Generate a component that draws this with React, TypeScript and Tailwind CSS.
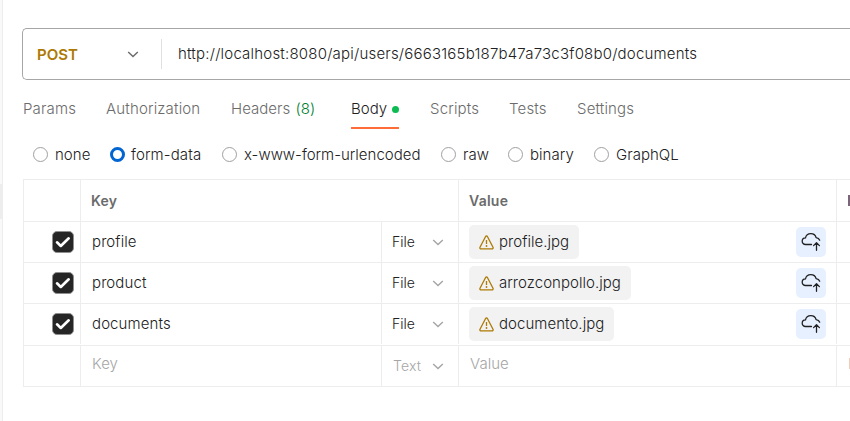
import React from "react";

function Chevron({ className, width }: { className: string; width: number }) {
  return (
    <svg width={width} height="7" viewBox="0 0 11 7" fill="none" className={className}>
      <path d="M0.7 0.9L5.5 5.6L10.3 0.9" stroke="currentColor" strokeWidth="1.4" />
    </svg>
  );
}

function Warning() {
  return (
    <svg width="15" height="15" viewBox="0 0 15 15" fill="none" className="shrink-0 text-[#ad7a03]">
      <path
        d="M6.6 1.5C7 .8 8 .8 8.4 1.5L14 12.2C14.4 13 13.9 13.900 13 13.900H2C1.100 13.900 .6 13 1 12.200Z"
        stroke="currentColor"
        strokeWidth="1.3"
        strokeLinejoin="round"
      />
      <path d="M7.500 5V9" stroke="currentColor" strokeWidth="1.300" />
      <circle cx="7.500" cy="11" r="0.900" fill="currentColor" />
    </svg>
  );
}

function CloudUpload() {
  return (
    <svg width="20" height="20" viewBox="0 0 20 20" fill="none" stroke="#212121" strokeWidth="1.300" strokeLinecap="round" strokeLinejoin="round">
      <path d="M10.500 12.500H4.500C2.500 12.500 1.200 11 1.200 9.200C1.200 7.300 2.600 6 4.500 5.900C5 3.300 7.200 1.600 9.800 1.600C12.400 1.600 14.500 3.200 15.100 5.600C16.900 5.800 18.200 6.700 18.700 8.200" />
      <path d="M15.500 18.300V11.200M12.600 13.600L15.500 10.700L18.400 13.600" />
    </svg>
  );
}

function Checkbox() {
  return (
    <span className="flex h-[22px] w-[22px] items-center justify-center rounded-[5px] border border-[#8f8f8f] bg-[#262626]">
      <svg width="16" height="14" viewBox="0 0 16 14" fill="none">
        <path d="M2 7.300L5.800 11L13.700 3.300" stroke="white" strokeWidth="2.600" strokeLinecap="round" strokeLinejoin="round" />
      </svg>
    </span>
  );
}

function Radio({ label, selected, className }: { label: string; selected?: boolean; className: string }) {
  return (
    <label className={`flex shrink-0 items-center text-[#212121] ${className}`}>
      <span className={`h-[15px] w-[15px] shrink-0 rounded-full ${selected ? "mr-[6px] border-[3px] border-[#0265d2]" : "mr-[7px] border border-[#a0a0a0]"}`} />
      <span className="relative top-px whitespace-nowrap">{label}</span>
    </label>
  );
}

const line = "border-[#ededed]";

function Row({ name, file, height }: { name: string; file: string; height: string }) {
  return (
    <div className={`flex border-b ${line} ${height}`}>
      <div className={`flex w-[57px] items-center justify-end border-r pr-[6px] ${line}`}>
        <Checkbox />
      </div>
      <div className={`flex w-[301px] items-center border-r pl-[11px] tracking-[0.1px] ${line}`}>{name}</div>
      <div className={`flex w-[77px] items-center border-r pl-[10px] ${line}`}>
        <span className="w-10 text-[14px] tracking-normal">File</span>
        <Chevron width={12} className="text-[#a6a6a6]" />
      </div>
      <div className={`flex w-[378px] items-center justify-between border-r pl-[10px] pr-[10px] ${line}`}>
        <span className="flex h-[34px] items-center gap-[5px] rounded-[5px] bg-[#f2f2f2] px-[10px]">
          <Warning />
          {file}
        </span>
        <span className="flex h-[30px] w-[30px] items-center justify-center rounded-[5px] bg-[#e7f0ff]">
          <CloudUpload />
        </span>
      </div>
    </div>
  );
}

export default function App() {
  return (
    <div className="flex h-[421px] w-[850px] overflow-hidden bg-white font-['Inter',sans-serif] text-[15px] leading-5 font-[360] tracking-[0.04px] text-[#212121]">
      <aside className="w-[3px] shrink-0 border-r border-[#ededed] bg-[#f9f9f9] pt-[184px]">
        <div className="h-[35px] bg-[#ededed]" />
      </aside>
      <main className="w-[847px] shrink-0 pt-7">
        <div className="ml-[19px] flex h-[52px] items-center rounded-l-[5px] border border-r-0 border-[#a6a6a6]">
          <span className="ml-[14px] mt-px w-[90px] font-semibold text-[#ad7a03]">POST</span>
          <Chevron width={12} className="text-[#6b6b6b]" />
          <span className="ml-[22px] mr-4 h-[30px] w-px bg-[#e0e0e0]" />
          <span className="whitespace-nowrap tracking-[0.205px]">http://localhost:8080/api/users/6663165b187b47a73c3f08b0/documents</span>
        </div>
        <nav className="ml-5 flex h-[49px] pt-[19px] tracking-[0.16px] text-[#6b6b6b]">
          <span className="w-[83px]">Params</span>
          <span className="w-[125px]">Authorization</span>
          <span className="w-[120px] tracking-[0.04px]">Headers <span className="ml-px text-[#007f31]">(8)</span></span>
          <span className="mr-[31px] flex h-[30px] w-12 justify-between border-b-2 border-[#ff6c37] tracking-normal text-[#212121]">
            Body
            <i className="mt-[7px] h-[7px] w-[7px] rounded-full bg-[#0cbb52]" />
          </span>
          <span className="w-[79px]">Scripts</span>
          <span className="w-[68px]">Tests</span>
          <span>Settings</span>
        </nav>
        <div className="ml-[30px] flex h-[50px] items-center">
          <Radio label="none" className="w-[77px]" />
          <Radio label="form-data" selected className="w-[112px] tracking-[0.12px]" />
          <Radio label="x-www-form-urlencoded" className="w-[219px] tracking-normal" />
          <Radio label="raw" className="w-[67px]" />
          <Radio label="binary" className="w-[86px]" />
          <Radio label="GraphQL" className="w-[90px]" />
        </div>
        <section className={`ml-5 border-l border-t ${line}`}>
          <div className={`flex h-[42px] border-b text-[14px] font-semibold tracking-[0.25px] text-[#6b6b6b] ${line}`}>
            <div className={`w-[57px] border-r ${line}`} />
            <div className={`flex w-[378px] items-center border-r pl-[10px] ${line}`}>Key</div>
            <div className={`flex w-[378px] items-center border-r pl-[10px] ${line}`}>Value</div>
            <div className="ml-[11px] mt-[15px] h-[11px] w-[2px] bg-[#7b6578]" />
          </div>
          <Row name="profile" file="profile.jpg" height="h-[41px]" />
          <Row name="product" file="arrozconpollo.jpg" height="h-[41px]" />
          <Row name="documents" file="documento.jpg" height="h-[42px] pb-px" />
          <div className={`flex h-[41px] border-b text-[#a6a6a6] ${line}`}>
            <div className={`w-[57px] border-r ${line}`} />
            <div className={`w-[301px] border-r pl-[11px] pt-2 ${line}`}>Key</div>
            <div className={`flex w-[77px] items-center border-r pl-[11px] ${line}`}>
              <span className="w-[39px] text-[14px] tracking-[0.2px]">Text</span>
              <Chevron width={12} className="text-[#a6a6a6]" />
            </div>
            <div className={`w-[378px] border-r pl-[11px] pt-2 ${line}`}>Value</div>
            <div className="ml-3 mt-3 h-[11px] w-px bg-[#f3cbb9]" />
          </div>
        </section>
      </main>
    </div>
  );
}
